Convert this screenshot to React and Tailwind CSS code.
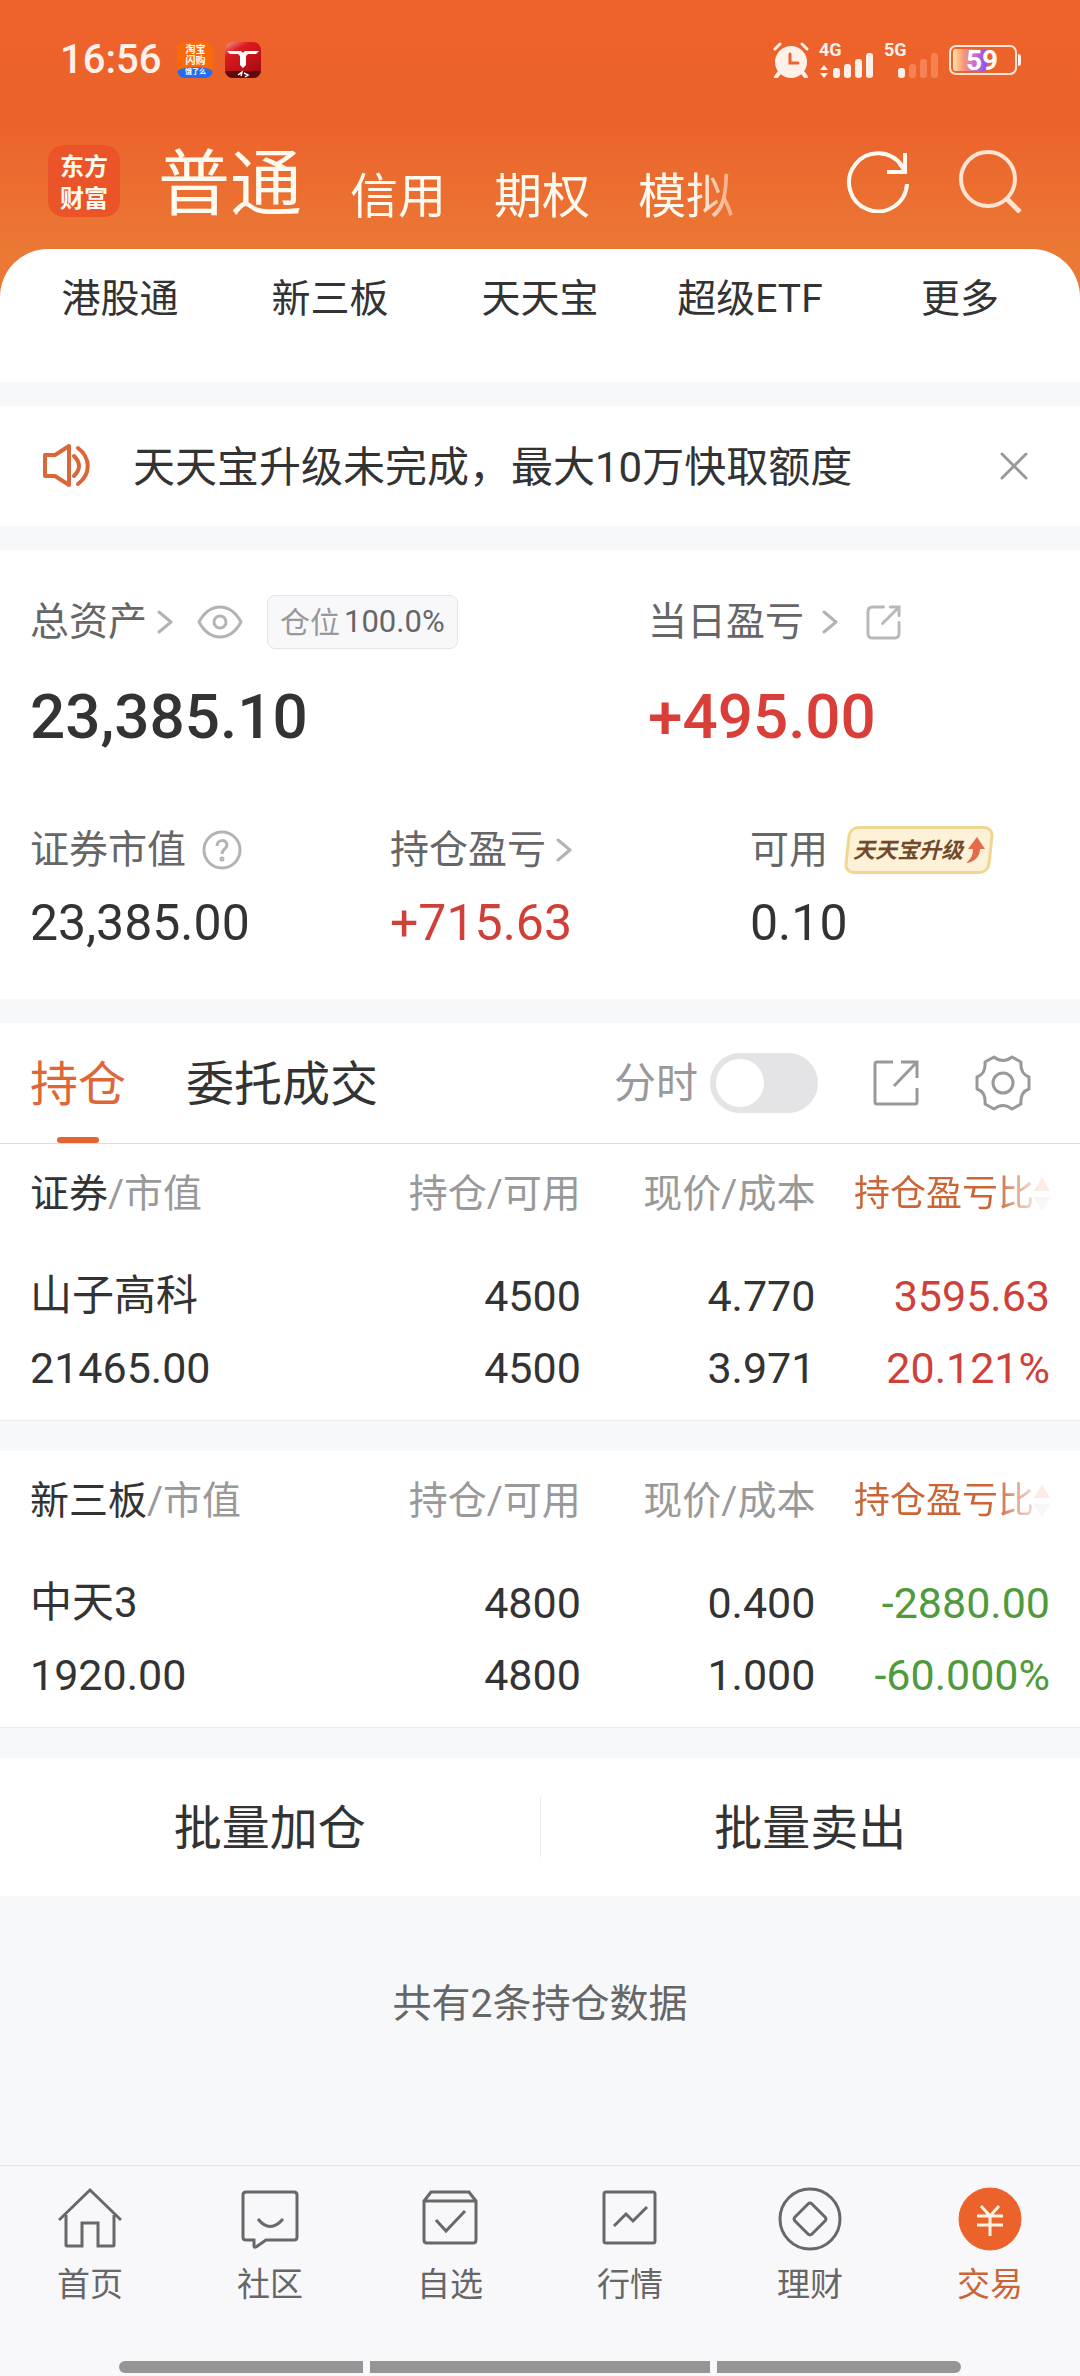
import { useState } from 'react';

const accounts = ['信用', '期权', '模拟'];

const quickLinks = ['港股通', '新三板', '天天宝', '超级ETF', '更多'];

const holdings = [
  {
    market: '证券',
    name: '山子高科',
    value: '21465.00',
    amount: '4500',
    available: '4500',
    price: '4.770',
    cost: '3.971',
    profit: '3595.63',
    ratio: '20.121%',
    color: 'text-[#cf4039]'
  },
  {
    market: '新三板',
    name: '中天3',
    value: '1920.00',
    amount: '4800',
    available: '4800',
    price: '0.400',
    cost: '1.000',
    profit: '-2880.00',
    ratio: '-60.000%',
    color: 'text-[#4f9a3c]'
  }
];

// 底部导航
const navItems = [
  {
    label: '首页',
    icon: (
      <>
        <path d="M1 33 L32 3 L63 33" />
        <path d="M8 28 V58 Q8 59 9 59 H24 V36 H40 V59 H55 Q56 59 56 58 V28" />
      </>
    )
  },
  {
    label: '社区',
    icon: (
      <>
        <path d="M7 5 H56 Q59 5 59 8 V50 Q59 53 56 53 H28 L18 60 Q16 61 16 59 V53 H8 Q5 53 5 50 V8 Q5 5 8 5" />
        <path d="M20 32 Q32 47 45 32" />
      </>
    )
  },
  {
    label: '自选',
    icon: (
      <>
        <path d="M6 14 L13 5 H51 L58 14 V53 Q58 56 55 56 H9 Q6 56 6 53 Z M6 14 H58" />
        <path d="M18 33 L28 44 L47 24" />
      </>
    )
  },
  {
    label: '行情',
    icon: (
      <>
        <rect x="6" y="5" width="51" height="51" rx="2" />
        <path d="M16 39 L28 27 L35 34 L49 20" />
      </>
    )
  },
  {
    label: '理财',
    icon: (
      <>
        <circle cx="32" cy="32" r="30" />
        <path d="M30 17 Q32 15 34 17 L47 30 Q49 32 47 34 L34 47 Q32 49 30 47 L17 34 Q15 32 17 30 Z" />
      </>
    )
  },
  {
    label: '交易',
    active: true,
    icon: (
      <>
        <circle cx="32" cy="32" r="31" fill="#ec622b" stroke="#ec622b" strokeWidth="1" />
        <path d="M23 19 L32 29 L41 19 M32 28 V49 M19 29 H45 M19 38 H45" stroke="#fff3e8" strokeWidth="3" />
      </>
    )
  }
];

const ChevronIcon = () => (
  <svg className="w-4 h-6" viewBox="0 0 16 24" fill="none" stroke="#b3b3b3" strokeWidth="3" strokeLinecap="round" strokeLinejoin="round">
    <path d="M2 2 L14 12 L2 22" />
  </svg>
);

const StatusBar = () => (
  <div className="h-[120px] flex items-center justify-between pl-[60px] pr-[58px] text-[#fff1ea]">
    <div className="flex items-center gap-3">
      <span className="text-[40px] leading-none font-medium mr-1">16:56</span>
      {/* 淘宝闪购 */}
      <span className="w-9 h-9 rounded-lg overflow-hidden bg-[#fb6a0a] flex flex-col items-center text-[10px] leading-[11px] font-bold text-white pt-[2px]">
        <span>淘宝</span>
        <span>闪购</span>
        <span className="w-full flex-1 mt-px bg-[#1f6ff0] rounded-t-[50%] text-[7px] leading-[10px] text-center">
          饿了么
        </span>
      </span>
      <svg className="w-9 h-9" viewBox="0 0 36 36">
        <defs>
          <linearGradient id="game" x1="0" y1="0" x2="0.6" y2="1">
            <stop offset="0" stopColor="#f2a093" />
            <stop offset="0.3" stopColor="#dd1c20" />
            <stop offset="1" stopColor="#a80b12" />
          </linearGradient>
          <clipPath id="gameClip"><rect width="36" height="36" rx="8" /></clipPath>
        </defs>
        <g clipPath="url(#gameClip)">
          <rect width="36" height="36" fill="url(#game)" />
          <rect y="29" width="36" height="7" fill="#5d0a0d" />
          <path d="M2 9 H16 L18 11 L20 9 H34 L31 12 H23 L21 14 V23 L18 26 L15 23 V14 L13 12 H5 Z" fill="#fff" />
          <path d="M13 33 L17 30 L16 34 M19 31 L23 33 L20 35" stroke="#fff" strokeWidth="1.5" fill="none" />
        </g>
      </svg>
    </div>

    <div className="flex items-center gap-[10px]">
      <svg className="w-9 h-9" viewBox="0 0 36 36" fill="none" stroke="currentColor" strokeLinecap="round">
        <circle cx="18" cy="20" r="16" fill="currentColor" stroke="none" />
        <path d="M2 7 L7 2 M34 7 L29 2" strokeWidth="3" />
        <path d="M6 31 L3 35 M30 31 L33 35" strokeWidth="4" />
        <path d="M17 12 V21 H25" stroke="#ec622b" strokeWidth="3" />
      </svg>
      <svg className="w-[55px] h-10 overflow-visible" viewBox="0 0 55 40" fill="currentColor">
        <text x="0" y="16" fontSize="18" fontWeight="700">4G</text>
        <path d="M5 25 L9 30 H1 Z M5 38 L9 33 H1 Z" />
        <rect x="14" y="28" width="7" height="10" rx="3" />
        <rect x="25" y="24" width="7" height="14" rx="3" />
        <rect x="36" y="19" width="7" height="19" rx="3" />
        <rect x="47" y="13" width="7" height="25" rx="3" />
      </svg>
      <svg className="w-[55px] h-10 overflow-visible" viewBox="0 0 55 40" fill="currentColor">
        <text x="0" y="16" fontSize="18" fontWeight="700">5G</text>
        <rect x="14" y="28" width="7" height="10" rx="3" />
        <g fill="#f58253">
          <rect x="25" y="24" width="7" height="14" rx="3" />
          <rect x="36" y="19" width="7" height="19" rx="3" />
          <rect x="47" y="13" width="7" height="25" rx="3" />
        </g>
      </svg>
      <svg className="w-[73px] h-9" viewBox="0 0 73 36">
        <defs>
          <linearGradient id="battery">
            <stop offset="0" stopColor="#ffe3a8" />
            <stop offset="0.3" stopColor="#f79a72" />
            <stop offset="0.6" stopColor="#cf72c8" />
            <stop offset="1" stopColor="#8a4ff5" />
          </linearGradient>
        </defs>
        <rect x="1" y="4" width="66" height="28" rx="6" fill="none" stroke="#ffe5d8" strokeWidth="2" />
        <rect x="4" y="7" width="34" height="22" rx="3" fill="url(#battery)" />
        <path d="M69 12 Q72 12 72 15 V21 Q72 24 69 24 Z" fill="#fff1ea" />
        <text x="33" y="28" fontSize="28" fontWeight="700" fill="#fff" textAnchor="middle">59</text>
      </svg>
    </div>
  </div>
);

const Header = () => (
  <header className="bg-[linear-gradient(180deg,#ee632b_0,#ec622b_120px,#eb7835_250px)]">
    <StatusBar />

    <div className="h-[129px] pb-2 flex items-center pl-12 pr-[58px] text-[#fffaf0]">
      <div className="w-[72px] h-[72px] rounded-2xl bg-[#ea5428] flex flex-col items-center justify-center text-[24px] leading-[32px] font-bold font-['Noto_Sans_CJK_SC',sans-serif]">
        <span>东方</span>
        <span>财富</span>
      </div>
      <nav className="flex-1 pt-2 ml-[38px] mr-[84px] flex items-end gap-12 overflow-hidden whitespace-nowrap [mask-image:linear-gradient(to_right,black_calc(100%-70px),transparent)]">
        <a href="#normal" className="text-[72px] leading-[84px]">普通</a>
        {accounts.map((item) => (
          <a key={item} href={`#${item}`} className="text-[48px] leading-[60px]">{item}</a>
        ))}
      </nav>
      <div className="flex gap-12">
        <button type="button" aria-label="刷新">
          <svg className="w-16 h-16" viewBox="0 0 64 64" fill="none" stroke="currentColor" strokeWidth="4">
            <path d="M61 35 A29 29 0 1 1 56 17" />
            <path d="M59 4 V23 H41 M59 22 L54 15" />
          </svg>
        </button>
        <button type="button" aria-label="搜索">
          <svg className="w-16 h-16" viewBox="0 0 64 64" fill="none" stroke="#ffe4d2" strokeWidth="4">
            <circle cx="30" cy="30" r="27" />
            <path d="M48 49 L62 63" strokeWidth="5" />
          </svg>
        </button>
      </div>
    </div>

    <nav className="bg-white rounded-t-[48px] px-[15px] pb-[33px] grid grid-cols-5">
      {quickLinks.map((item) => (
        <a key={item} href={`#${item}`} className="h-[100px] flex items-center justify-center text-[39px]">
          {item}
        </a>
      ))}
    </nav>
  </header>
);

const Notice = ({ onClose }) => (
  <section className="h-[120px] mt-6 bg-white flex items-center pl-[42px] pr-[50px]">
    <svg className="w-12 h-12" viewBox="0 0 48 48" fill="none" stroke="#da6738" strokeWidth="4" strokeLinejoin="round" strokeLinecap="round">
      <path d="M3 13 H13 L27 4 V43 L13 34 H3 Z" />
      <path d="M32 14 Q42 24 32 34 M36 6 C49 16 49 32 36 42" />
    </svg>
    <p className="flex-1 ml-[43px] pt-[2px] text-[42px]">天天宝升级未完成，最大10万快取额度</p>
    <button type="button" aria-label="关闭" onClick={onClose}>
      <svg className="w-8 h-8" viewBox="0 0 32 32" stroke="#999" strokeWidth="3" strokeLinecap="round">
        <path d="M4 4 L28 28 M28 4 L4 28" />
      </svg>
    </button>
  </section>
);

const Assets = () => (
  <section className="mt-6 bg-white pt-[45px] pb-[46px] text-[39px] text-[#666]">
    <div className="flex">
      <div className="flex-1 pl-[30px]">
        <div className="h-[54px] flex items-center">
          <button type="button" className="flex items-center gap-[10px]">总资产<ChevronIcon /></button>
          <button type="button" aria-label="隐藏金额" className="ml-6">
            <svg className="w-[46px] h-[34px]" viewBox="0 0 46 34" fill="none" stroke="#b3b3b3" strokeWidth="3">
              <path d="M2 17 C13 -3 33 -3 44 17 C33 37 13 37 2 17 Z" strokeLinejoin="round" />
              <circle cx="23" cy="17" r="6" />
            </svg>
          </button>
          <span className="ml-6 h-[54px] px-3 rounded-lg border border-[#e4e4e6] bg-[#f8f8fb] flex items-center gap-1 text-[30px]">
            <span className="text-[#999]">仓位</span>
            <span className="text-[31px]">100.0%</span>
          </span>
        </div>
        <div className="mt-[31px] text-[62px] leading-[74px] font-medium text-[#333]">23,385.10</div>
      </div>
      <div className="w-[40%]">
        <div className="h-[54px] flex items-center">
          <button type="button" className="flex items-center gap-[18px]">当日盈亏<ChevronIcon /></button>
          <button type="button" aria-label="分享当日盈亏" className="ml-7">
            <svg className="w-[35px] h-[35px]" viewBox="0 0 36 36" fill="none" stroke="#b8b8b8" strokeWidth="3" strokeLinecap="round">
              <path d="M18 2 H7 Q2 2 2 7 V29 Q2 34 7 34 H29 Q34 34 34 29 V18" />
              <path d="M25 2 H34 V11 M34 2 L17 19" />
            </svg>
          </button>
        </div>
        <div className="mt-[31px] text-[62px] leading-[74px] font-medium text-[#d93f38]">+495.00</div>
      </div>
    </div>

    <div className="mt-[72px] grid grid-cols-3">
      <div className="pl-[30px]">
        <div className="h-12 flex items-center gap-4">
          证券市值
          <button type="button" aria-label="证券市值说明">
            <svg className="w-10 h-10" viewBox="0 0 40 40" fill="none" stroke="#b3b3b3" strokeWidth="3">
              <circle cx="20" cy="20" r="18" />
              <path d="M15 16 C15 9 25 9 25 15 C25 19 20 19 20 24" />
              <circle cx="20" cy="29" r="1" />
            </svg>
          </button>
        </div>
        <div className="mt-[19px] text-[50px] leading-[60px] text-[#333]">23,385.00</div>
      </div>
      <div className="pl-[30px]">
        <button type="button" className="h-12 flex items-center gap-[10px]">持仓盈亏<ChevronIcon /></button>
        <div className="mt-[19px] text-[50px] leading-[60px] text-[#cf4039]">+715.63</div>
      </div>
      <div className="pl-[30px]">
        <div className="h-12 flex items-center gap-4">
          可用
          <button type="button" className="relative h-12 px-[9px] flex items-center gap-[2px]">
            <span className="absolute inset-y-0 inset-x-[2px] -skew-x-6 rounded-[10px] border-3 border-[#f1d692] bg-[#fdf1d8]" />
            <span className="relative text-[22px] font-bold italic text-[#704a2a]">天天宝升级</span>
            <svg className="relative w-5 h-7" viewBox="0 0 20 28">
              <path d="M12 1 L20 13 H15 C15 20 10 26 1 27 C6 23 8 19 8 13 H3 Z" fill="#e8694a" />
            </svg>
          </button>
        </div>
        <div className="mt-[19px] text-[50px] leading-[60px] text-[#333]">0.10</div>
      </div>
    </div>
  </section>
);

const HoldingTable = ({ item }) => (
  <div className="bg-white px-[30px] pb-4 border-b border-[#ececef]">
    <table className="w-full table-fixed text-right">
      <thead>
        <tr className="h-[100px] text-[39px] text-[#999]">
          <th className="p-0 font-normal text-left">
            <span className="text-[#333]">{item.market}</span>/市值
          </th>
          <th className="p-0 font-normal w-[23%]">持仓/可用</th>
          <th className="p-0 font-normal w-[23%]">现价/成本</th>
          <th className="p-0 font-normal w-[23%]">
            <button type="button" className="ml-auto flex items-center text-[36px] text-[#cb6536] whitespace-nowrap [mask-image:linear-gradient(to_right,black_72%,rgba(0,0,0,0.12)_94%)]">
              持仓盈亏比
              <svg className="w-4 h-9" viewBox="0 0 16 36">
                <path d="M8 1 L16 15 H0 Z" fill="#e9662f" />
                <path d="M8 35 L16 21 H0 Z" fill="#bbb" />
              </svg>
            </button>
          </th>
        </tr>
      </thead>
      <tbody className="text-[43px] leading-[72px]">
        <tr>
          <td className="p-0 pt-4 text-left">
            <div className="text-[42px]">{item.name}</div>
            <div>{item.value}</div>
          </td>
          <td className="p-0 pt-4">
            <div>{item.amount}</div>
            <div>{item.available}</div>
          </td>
          <td className="p-0 pt-4">
            <div>{item.price}</div>
            <div>{item.cost}</div>
          </td>
          <td className={`p-0 pt-4 ${item.color}`}>
            <div>{item.profit}</div>
            <div>{item.ratio}</div>
          </td>
        </tr>
      </tbody>
    </table>
  </div>
);

const TabBar = ({ checked, onChange }) => (
  <div className="h-[121px] mt-6 bg-white border-b border-[#dedee0] flex items-center pl-[30px] pr-[49px]">
    <button type="button" className="relative h-full pt-1 text-[48px] text-[#de6736]">
      持仓
      <span className="absolute bottom-0 left-1/2 -translate-x-1/2 w-[42px] h-[6px] rounded-full bg-[#e4662f]" />
    </button>
    <button type="button" className="h-full pt-1 ml-[60px] text-[48px]">委托成交</button>
    <label className="ml-auto flex items-center gap-3 text-[42px] text-[#999]">
      分时
      <input
        type="checkbox"
        role="switch"
        checked={checked}
        onChange={onChange}
        className="appearance-none w-[108px] h-[60px] p-[6px] rounded-full bg-[#e4e4e7] checked:bg-[#ec622b] before:content-[''] before:block before:w-12 before:h-12 before:rounded-full before:bg-white checked:before:ml-auto"
      />
    </label>
    <button type="button" aria-label="分享持仓" className="ml-[54px]">
      <svg className="w-12 h-12" viewBox="0 0 48 48" fill="none" stroke="#999" strokeWidth="3">
        <path d="M21 3 H5 Q3 3 3 5 V43 Q3 45 5 45 H43 Q45 45 45 43 V29" />
        <path d="M29 3 H45 V19 M45 3 L22 27" />
      </svg>
    </button>
    <button type="button" aria-label="设置" className="ml-[55px]">
      <svg className="w-14 h-14" viewBox="0 0 56 56" fill="none" stroke="#999" strokeWidth="3" strokeLinejoin="round">
        <path d="M19 2 Q28 9 37 2 L46 7 Q45 19 54 22 V34 Q45 37 46 49 L37 54 Q28 47 19 54 L10 49 Q11 37 2 34 V22 Q11 19 10 7 Z" />
        <circle cx="28" cy="28" r="10" />
      </svg>
    </button>
  </div>
);

const BottomNav = () => (
  <footer className="mt-auto border-t border-[#e3e5e8] bg-[#f8f8fb]">
    <nav className="grid grid-cols-6 pt-[21px] text-[33px] leading-[44px] text-[#666]">
      {navItems.map((item) => (
        <a
          key={item.label}
          href={`#${item.label}`}
          className={`flex flex-col items-center gap-3 ${item.active ? 'text-[#cb6536]' : ''}`}
        >
          <svg className="w-16 h-16" viewBox="0 0 64 64" fill="none" stroke="#686868" strokeWidth="3">
            {item.icon}
          </svg>
          {item.label}
        </a>
      ))}
    </nav>
    {/* 系统手势条 */}
    <div className="mt-[54px] mb-[3px] px-[11%] flex gap-[7px]">
      <span className="h-3 w-[29%] rounded-l-full bg-[#959595]" />
      <span className="h-3 flex-1 bg-[#959595]" />
      <span className="h-3 w-[29%] rounded-r-full bg-[#959595]" />
    </div>
  </footer>
);

const App = () => {
  const [showNotice, setShowNotice] = useState(true);
  const [minuteChart, setMinuteChart] = useState(false);

  return (
    <div className="min-h-screen flex flex-col bg-[#f7f8fa] text-[#333] font-[Roboto,'Noto_Sans_CJK_SC',sans-serif]">
      <Header />
      {showNotice && <Notice onClose={() => setShowNotice(false)} />}
      <Assets />

      <TabBar checked={minuteChart} onChange={(e) => setMinuteChart(e.target.checked)} />
      <div className="flex flex-col gap-[30px]">
        {holdings.map((item) => (
          <HoldingTable key={item.name} item={item} />
        ))}
      </div>

      <div className="h-[138px] mt-[30px] bg-white flex items-center text-[48px]">
        <button type="button" className="flex-1 h-full pt-1">批量加仓</button>
        <span className="w-px h-[60px] bg-[#ececef]" />
        <button type="button" className="flex-1 h-full pt-1">批量卖出</button>
      </div>

      <p className="mt-[78px] text-center text-[39px] leading-[60px] text-[#666]">共有2条持仓数据</p>

      <BottomNav />
    </div>
  );
};

export default App;
